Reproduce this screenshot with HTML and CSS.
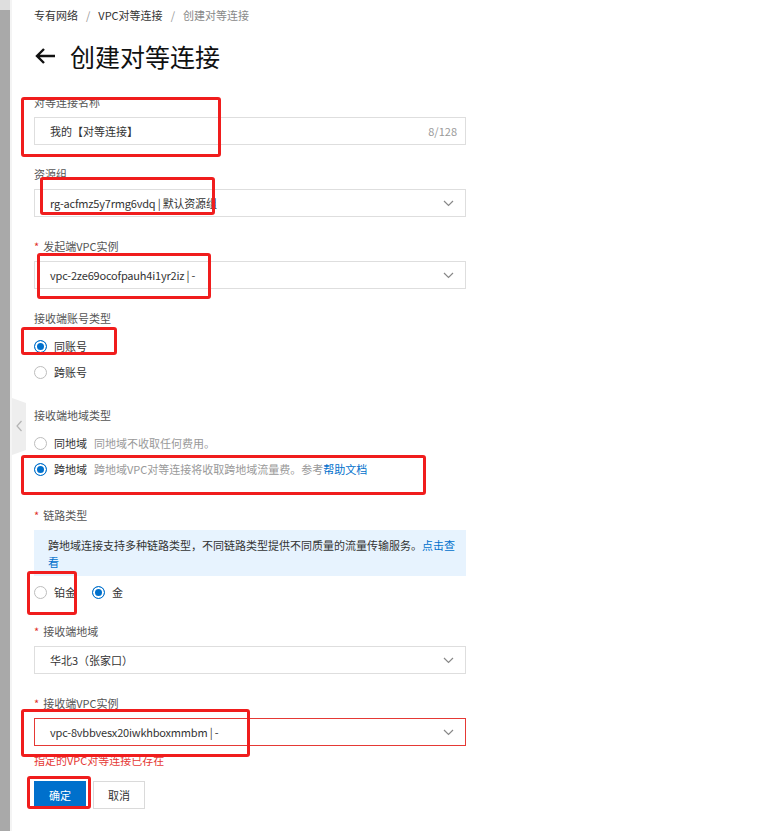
FILE: index.html
```html
<!DOCTYPE html>
<html lang="zh-CN">
<head>
<meta charset="utf-8">
<title>创建对等连接</title>
<link rel="stylesheet" href="styles.css">
</head>
<body>
<div class="page">
  <div class="rail"><div class="rail-top"></div><div class="rail-bar"></div></div>
  <main class="main">
    <nav class="crumbs">
      <span>专有网络</span><span class="sep">/</span><span>VPC对等连接</span><span class="sep">/</span><span class="cur">创建对等连接</span>
    </nav>
    <h1 class="title">
      <svg class="back" width="22" height="18" viewBox="0 0 22 18"><path d="M21 9H3M10 2L3 9l7 7" fill="none" stroke="#111" stroke-width="2.4"/></svg>
      <span>创建对等连接</span>
    </h1>
    <form class="form">
      <div class="item">
        <label class="lbl">对等连接名称</label>
        <div class="field"><span>我的【对等连接】</span><span class="count">8/128</span></div>
      </div>
      <div class="item">
        <label class="lbl">资源组</label>
        <div class="field"><span class="lat">rg-acfmz5y7rmg6vdq | 默认资源组</span><svg class="chev" width="11" height="7" viewBox="0 0 11 7"><path d="M1 1l4.5 4.5L10 1" fill="none" stroke="#888" stroke-width="1.2"/></svg></div>
      </div>
      <div class="item">
        <label class="lbl req">发起端VPC实例</label>
        <div class="field"><span class="lat">vpc-2ze69ocofpauh4i1yr2iz | -</span><svg class="chev" width="11" height="7" viewBox="0 0 11 7"><path d="M1 1l4.5 4.5L10 1" fill="none" stroke="#888" stroke-width="1.2"/></svg></div>
      </div>
      <div class="item gap22">
        <label class="lbl">接收端账号类型</label>
        <div class="radios">
          <div class="rrow"><span class="dot on"></span><span>同账号</span></div>
          <div class="rrow"><span class="dot"></span><span>跨账号</span></div>
        </div>
      </div>
      <div class="item gap25">
        <label class="lbl">接收端地域类型</label>
        <div class="radios">
          <div class="rrow"><span class="dot"></span><span>同地域</span><span class="desc">同地域不收取任何费用。</span></div>
          <div class="rrow"><span class="dot on"></span><span>跨地域</span><span class="desc">跨地域VPC对等连接将收取跨地域流量费。参考<a class="link">帮助文档</a></span></div>
        </div>
      </div>
      <div class="item gap18">
        <label class="lbl req">链路类型</label>
        <div class="info">跨地域连接支持多种链路类型，不同链路类型提供不同质量的流量传输服务。<a class="link">点击查<br>看</a></div>
        <div class="radios inline">
          <div class="rrow"><span class="dot"></span><span>铂金</span></div>
          <div class="rrow"><span class="dot on"></span><span>金</span></div>
        </div>
      </div>
      <div class="item">
        <label class="lbl req">接收端地域</label>
        <div class="field"><span>华北3（张家口）</span><svg class="chev" width="11" height="7" viewBox="0 0 11 7"><path d="M1 1l4.5 4.5L10 1" fill="none" stroke="#888" stroke-width="1.2"/></svg></div>
      </div>
      <div class="item last">
        <label class="lbl req">接收端VPC实例</label>
        <div class="field err"><span class="lat">vpc-8vbbvesx20iwkhboxmmbm | -</span><svg class="chev" width="11" height="7" viewBox="0 0 11 7"><path d="M1 1l4.5 4.5L10 1" fill="none" stroke="#888" stroke-width="1.2"/></svg></div>
        <div class="errmsg">指定的VPC对等连接已存在</div>
      </div>
      <div class="actions">
        <button type="button" class="btn primary">确定</button>
        <button type="button" class="btn">取消</button>
      </div>
    </form>
  </main>

  <div class="tab">
    <svg width="14" height="57" viewBox="0 0 14 57"><path d="M0 0L14 5V52L0 57Z" fill="#eeeeee"/><path d="M9.5 23L5 28l4.5 5" fill="none" stroke="#b3b3b3" stroke-width="1.2"/></svg>
  </div>

  <span class="mark m1"></span>
  <span class="mark m2"></span>
  <span class="mark m3"></span>
  <span class="mark m4"></span>
  <span class="mark m5"></span>
  <span class="mark m6"></span>
  <span class="mark m7"></span>
  <span class="mark m8"></span>
</div>
</body>
</html>
```
FILE: styles.css
```css
* { box-sizing: border-box; margin: 0; padding: 0; }
html, body { background: #fff; }
body {
  font-family: "Noto Sans CJK SC", "Noto Sans", sans-serif;
  font-size: 11px;
  color: #333;
}
.page {
  position: relative;
  display: flex;
  width: 772px;
  min-height: 831px;
}
.rail {
  width: 12px;
  flex: none;
  display: flex;
  flex-direction: column;
  border-right: 2px solid #f4f4f4;
}
.rail-top { height: 10px; background: #dedede; }
.rail-bar { flex: 1; background: #a9a9a9; }

.main { flex: 1; padding: 7px 0 0 22px; }

.crumbs {
  display: flex;
  gap: 8px;
  line-height: 16px;
  color: #333;
}
.crumbs .sep { color: #999; }
.crumbs .cur { color: #888; }

.title {
  margin-top: 17px;
  height: 32px;
  display: flex;
  align-items: center;
  font-size: 25px;
  font-weight: normal;
  color: #111;
}
.title .back { margin-right: 14px; }

.form { margin-top: 22px; width: 432px; }
.item { margin-bottom: 21px; }
.item.gap22 { margin-bottom: 22px; }
.item.gap25 { margin-bottom: 25px; }
.item.gap18 { margin-bottom: 18px; }
.item.last { margin-bottom: 0; }

.lbl {
  display: block;
  line-height: 16px;
  color: #555;
  margin-bottom: 7px;
}
.lbl.req::before {
  content: "*";
  color: #e0302a;
  margin-right: 4px;
}

.field {
  height: 28px;
  border: 1px solid #dedede;
  display: flex;
  align-items: center;
  justify-content: space-between;
  padding: 0 11px 0 15px;
  color: #333;
}
.field .lat { letter-spacing: -0.2px; }
.field.err { border-color: #e53935; }
.count { color: #999; margin-right: -3px; }

.radios { display: flex; flex-direction: column; }
.radios.inline { flex-direction: row; gap: 16px; margin-top: 3px; }
.rrow { height: 26px; display: flex; align-items: center; color: #333; }
.dot {
  width: 13px;
  height: 13px;
  border: 1px solid #bdbdbd;
  border-radius: 50%;
  margin-right: 7px;
  background: #fff;
}
.dot.on {
  border: 1.5px solid #0070cc;
  background: #0070cc;
  box-shadow: inset 0 0 0 2px #fff;
}
.desc { color: #999; margin-left: 7px; }
.link { color: #0070cc; text-decoration: none; }

.info {
  background: #e7f3fe;
  padding: 7px 8px 5px 14px;
  line-height: 17px;
  color: #333;
  white-space: nowrap;
}

.errmsg {
  margin-top: 6px;
  line-height: 16px;
  color: #e53935;
}

.actions { display: flex; gap: 7px; margin-top: 13px; }
.btn {
  width: 52px;
  height: 28px;
  border: 1px solid #dadada;
  background: #fff;
  color: #333;
  font-family: inherit;
  font-size: 11px;
}
.btn.primary { background: #0070cc; border-color: #0070cc; color: #fff; }

.tab {
  position: absolute;
  left: 12px;
  top: 398px;
  width: 14px;
  height: 57px;
  display: flex;
}

.mark {
  position: absolute;
  border: 3px solid #f01d1d;
  border-radius: 3px;
}
.m1 { left: 21px; top: 97px; width: 200px; height: 60px; }
.m2 { left: 40px; top: 177px; width: 175px; height: 38px; }
.m3 { left: 37px; top: 253px; width: 174px; height: 46px; }
.m4 { left: 21px; top: 327px; width: 96px; height: 28px; }
.m5 { left: 21px; top: 455px; width: 405px; height: 40px; }
.m6 { left: 27px; top: 571px; width: 50px; height: 44px; }
.m7 { left: 21px; top: 709px; width: 229px; height: 48px; }
.m8 { left: 27px; top: 776px; width: 64px; height: 33px; }
```
